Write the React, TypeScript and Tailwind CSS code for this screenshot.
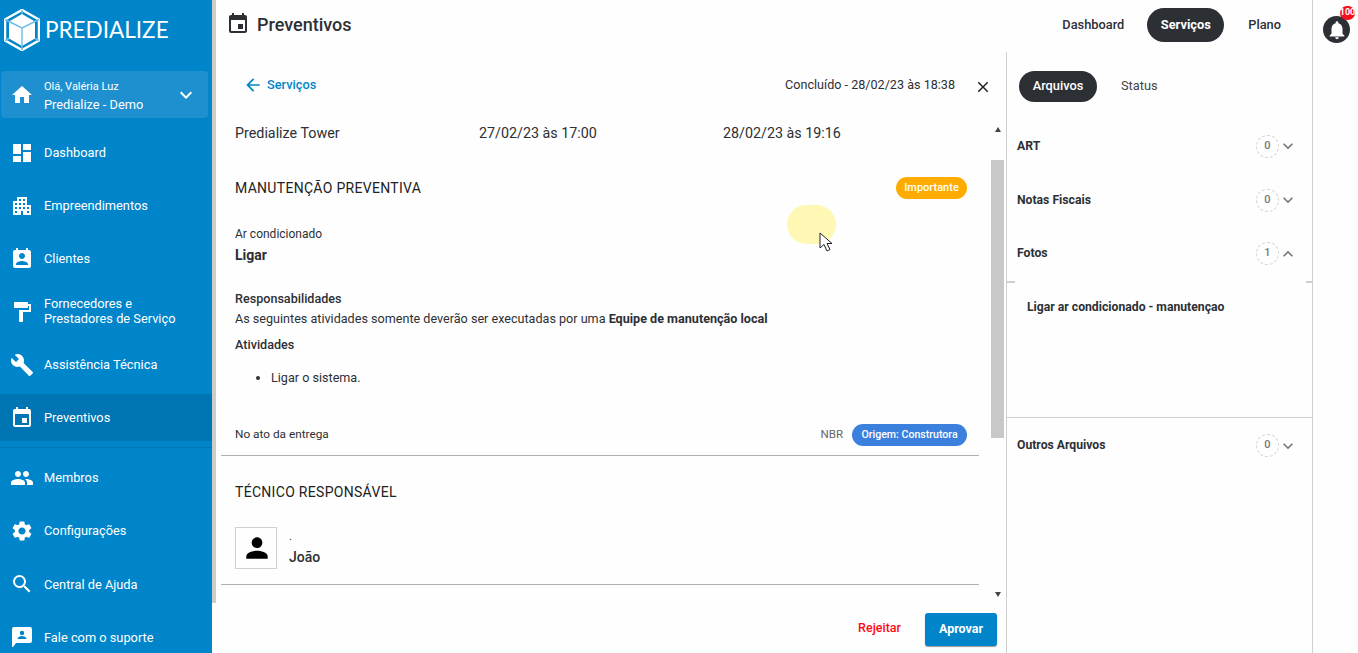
import {
  MdApartment,
  MdArrowBack,
  MdBuild,
  MdClose,
  MdDashboard,
  MdEvent,
  MdExpandLess,
  MdExpandMore,
  MdFormatPaint,
  MdHome,
  MdNotifications,
  MdPeople,
  MdPermContactCalendar,
  MdPerson,
  MdSearch,
  MdSettings,
} from 'react-icons/md';
import type { ReactNode } from 'react';

function Logo() {
  return (
    <svg width="36" height="42" viewBox="0 0 36 42" className="shrink-0">
      <path d="M18 1 35 10.500 35 31.500 18 41 1 31.500 1 10.500Z" fill="none" stroke="#ffffff" strokeWidth="2.500" />
      <path d="M18 5 31 12.500 31 29.500 18 37 5 29.500 5 12.500Z" fill="#ffffff" />
      <path d="M5 12.500 18 19 31 12.500M18 19V37M18 1V5M1 10.500 5 12.500M35 10.500 31 12.500M18 37V41M1 31.500 5 29.500M35 31.500 31 29.500" fill="none" stroke="#6dbce8" strokeWidth="1.400" />
    </svg>
  );
}

function SupportIcon() {
  return (
    <svg width="20" height="20" viewBox="0 0 20 20" fill="currentColor">
      <path d="M2 0h16a2 2 0 0 1 2 2v12a2 2 0 0 1-2 2H4l-3 4H0V2a2 2 0 0 1 2-2Z" />
      <circle cx="10" cy="6" r="2.2" fill="#0085ca" />
      <path d="M5.5 12c0-2 2.500-3 4.500-3s4.500 1 4.500 3Z" fill="#0085ca" />
    </svg>
  );
}

const NAV_TOP: { label: ReactNode; icon: ReactNode; active?: boolean }[] = [
  { label: 'Dashboard', icon: <MdDashboard size={24} /> },
  { label: 'Empreendimentos', icon: <MdApartment size={24} /> },
  { label: 'Clientes', icon: <MdPermContactCalendar size={24} /> },
  { label: <span className="block pb-[2px]">Fornecedores e<br />Prestadores de Serviço</span>, icon: <MdFormatPaint size={24} /> },
  { label: 'Assistência Técnica', icon: <MdBuild size={24} /> },
  { label: 'Preventivos', icon: <MdEvent size={24} />, active: true },
];

const NAV_BOTTOM: { label: string; icon: ReactNode }[] = [
  { label: 'Membros', icon: <MdPeople size={24} /> },
  { label: 'Configurações', icon: <MdSettings size={24} /> },
  { label: 'Central de Ajuda', icon: <MdSearch size={24} /> },
  { label: 'Fale com o suporte', icon: <SupportIcon /> },
];

function NavItem({ label, icon, active }: { label: ReactNode; icon: ReactNode; active?: boolean }) {
  return (
    <div className="h-[53px] py-[3px]">
      <div className={`flex h-[47px] items-center pl-[10px] text-[12.800px] leading-[15px] text-white ${active ? 'bg-[#0075b3]' : ''}`}>
        <span className="flex w-[24px] justify-center">{icon}</span>
        <span className="ml-[10px]">{label}</span>
      </div>
    </div>
  );
}

function Sidebar() {
  return (
    <aside className="flex h-[653px] w-[212px] shrink-0 flex-col overflow-hidden bg-[#0085ca]">
      <div className="flex h-[71px] shrink-0 items-start pl-[4px] pt-[9px] text-white">
        <Logo />
        <span className="ml-[5px] mt-[7px] text-[22.500px] leading-[28px] font-['Lato',sans-serif]">PREDIALIZE</span>
      </div>
      <div className="ml-[1px] flex h-[47px] w-[207px] shrink-0 items-center rounded-[4px] bg-[#1e90d0] pl-[9px] pr-[10px] text-white">
        <MdHome size={24} />
        <div className="ml-[10px] flex-1 pt-[2px]">
          <div className="text-[11px] leading-[14px]">Olá, Valéria Luz</div>
          <div className="mt-[3px] text-[12.800px] leading-[15px]">Predialize - Demo</div>
        </div>
        <MdExpandMore size={24} />
      </div>
      <nav className="mt-[8px] shrink-0">
        <div>
          {NAV_TOP.map((item, i) => (
            <NavItem key={i} {...item} />
          ))}
        </div>
        <div className="mt-[3px] grid auto-rows-[53.300px] border-t border-[#0075b3] pt-[3px]">
          {NAV_BOTTOM.map((item) => (
            <NavItem key={item.label} {...item} />
          ))}
        </div>
      </nav>
    </aside>
  );
}

function TopBar() {
  return (
    <header className="flex h-[50px] items-center justify-between pl-[10px] pr-[31px]">
      <div className="mb-[2px] flex items-center text-[#2c3035]">
        <MdEvent size={24} />
        <h1 className="ml-[7px] text-[18px] font-medium">Preventivos</h1>
      </div>
      <div className="flex items-center text-[12.800px] font-medium text-[#2c3035]">
        <span>Dashboard</span>
        <span className="ml-[23px] flex h-[34px] w-[77px] items-center justify-center rounded-full bg-[#2c3035] font-bold text-white">Serviços</span>
        <span className="ml-[24px]">Plano</span>
      </div>
    </header>
  );
}

function Scrollbar() {
  return (
    <div className="ml-[12px] flex w-[13px] flex-col items-center">
      <div className="mt-[7px] h-0 w-0 border-x-[3.500px] border-b-[5px] border-x-transparent border-b-[#444]" />
      <div className="mt-[28px] h-[278px] w-[13px] bg-[#c8c8c8]" />
      <div className="mt-[154px] h-0 w-0 border-x-[3.500px] border-t-[5px] border-x-transparent border-t-[#444]" />
    </div>
  );
}

function Detail() {
  return (
    <section className="flex min-w-0 flex-1 flex-col">
      <div className="mt-[2px] flex h-[68px] items-center justify-between pl-[27px] pr-[14px] pb-[2px]">
        <div className="flex items-center text-[12.800px] font-medium text-[#0085ca]">
          <MdArrowBack size={20} />
          <span className="ml-[4px]">Serviços</span>
        </div>
        <div className="flex items-center text-[12.600px] text-[#2c3035]">
          <span>Concluído - 28/02/23 às 18:38</span>
          <MdClose size={18} className="ml-[19px] mt-[3px] text-[#222]" />
        </div>
      </div>

      <div className="flex h-[485px] pl-[5px]">
        <div className="w-[758px] overflow-hidden text-[#2c3035]">
          <div className="grid h-[26px] grid-cols-[244px_244px_1fr] items-center px-[14px] pt-[2px] text-[14.300px]">
            <span>Predialize Tower</span>
            <span>27/02/23 às 17:00</span>
            <span>28/02/23 às 19:16</span>
          </div>
          <div className="border-b border-[#b0b0b0] px-[14px] pb-[9px]">
            <div className="mt-[31px] flex h-[22px] items-center justify-between">
              <h2 className="text-[14px] tracking-[0.3px] text-[#222]">MANUTENÇÃO PREVENTIVA</h2>
              <span className="mr-[-2px] flex h-[22px] w-[71px] items-center justify-center rounded-full bg-[#ffab00] text-[11px] font-medium text-white">Importante</span>
            </div>
            <p className="mt-[27px] text-[12px] leading-[16px]">Ar condicionado</p>
            <p className="mt-[3px] text-[14px] leading-[20px] font-bold">Ligar</p>
            <p className="mt-[26px] text-[12.600px] leading-[16px] font-medium">Responsabilidades</p>
            <p className="mt-[4px] text-[12.600px] leading-[16px]">
              As seguintes atividades somente deverão ser executadas por uma <b className="font-bold">Equipe de manutenção local</b>
            </p>
            <p className="mt-[10px] text-[12.600px] leading-[16px] font-medium">Atividades</p>
            <ul className="mt-[17px] list-disc pl-[36px] text-[12.600px] leading-[16px]">
              <li>Ligar o sistema.</li>
            </ul>
            <div className="mt-[38px] flex h-[22px] items-center justify-between">
              <span className="text-[11.800px]">No ato da entrega</span>
              <div className="mr-[-2px] flex items-center">
                <span className="text-[11.500px] text-[#666]">NBR</span>
                <span className="ml-[9px] flex h-[22px] w-[115px] items-center justify-center rounded-full bg-[#3a80dc] text-[10.600px] font-medium text-white">Origem: Construtora</span>
              </div>
            </div>
          </div>
          <div className="border-b border-[#b0b0b0] px-[14px] pb-[15px]">
            <h2 className="mt-[27px] text-[14px] leading-[18px] tracking-[0.3px] text-[#222]">TÉCNICO RESPONSÁVEL</h2>
            <div className="mt-[26px] flex items-center">
              <div className="flex h-[42px] w-[42px] items-center justify-center border border-[#d0d0d0] pl-[2px]">
                <MdPerson size={32} className="text-black" />
              </div>
              <div className="ml-[12px]">
                <p className="h-[14px] text-[11px] leading-[14px]">.</p>
                <p className="mt-[4px] text-[14px] leading-[18px] font-medium">João</p>
              </div>
            </div>
          </div>
        </div>
        <Scrollbar />
      </div>

      <div className="flex flex-1 items-center justify-end pr-[9px] pt-[1px] pb-[1px]">
        <span className="mb-[2px] text-[12.500px] font-medium text-[#ff0a16]">Rejeitar</span>
        <span className="ml-[24px] flex h-[33px] w-[72px] items-center justify-center rounded-[3px] bg-[#0085ca] text-[12.500px] font-bold text-white shadow-[0_1px_1px_#999]">Aprovar</span>
      </div>
    </section>
  );
}

function AccordionRow({ title, count, open, h }: { title: string; count: number; open?: boolean; h: string }) {
  return (
    <div className={`flex items-center justify-between pl-[10px] pr-[17px] ${h}`}>
      <span className="text-[12.200px] font-bold text-[#2c3035]">{title}</span>
      <div className="flex items-center text-[#777]">
        <span className="flex h-[23px] w-[23px] items-center justify-center rounded-full border border-dashed border-[#d4d4d4] text-[11px] font-medium">{count}</span>
        <span className="ml-[2px] flex w-[14px] justify-center">
          {open ? <MdExpandLess size={20} className="shrink-0" /> : <MdExpandMore size={20} className="shrink-0" />}
        </span>
      </div>
    </div>
  );
}

function FilesPanel() {
  return (
    <aside className="mt-[2px] w-[306px] shrink-0 border-l border-[#cfcfcf] text-[#2c3035]">
      <div className="flex h-[68px] items-center pl-[12px] text-[12.800px] font-medium">
        <span className="flex h-[31px] w-[78px] items-center justify-center rounded-full bg-[#2c3035] text-white">Arquivos</span>
        <span className="ml-[24px] font-normal text-[#444]">Status</span>
      </div>
      <AccordionRow title="ART" count={0} h="h-[50px] mt-[1px]" />
      <AccordionRow title="Notas Fiscais" count={0} h="h-[54px] mt-[2px]" />
      <AccordionRow title="Fotos" count={1} open h="h-[53px]" />
      <div className="mt-[1px] h-[137px] border-b border-[#cfcfcf]">
        <div className="flex justify-between">
          <span className="h-[2px] w-[8px] bg-[#cfcfcf]" />
          <span className="h-[2px] w-[6px] bg-[#cfcfcf]" />
        </div>
        <p className="ml-[20px] mt-[15px] text-[12.200px] font-bold">Ligar ar condicionado - manutençao</p>
      </div>
      <AccordionRow title="Outros Arquivos" count={0} h="h-[55px]" />
    </aside>
  );
}

export default function App() {
  return (
    <div className="relative flex h-[653px] w-[1358px] overflow-hidden bg-[#fefefe] font-['Roboto',sans-serif]">
      <Sidebar />
      <div className="h-[603px] w-[4px] shrink-0 bg-[#cccccc]" />
      <main className="flex w-[1097px] shrink-0 flex-col border-r border-[#cfcfcf]">
        <TopBar />
        <div className="flex min-h-0 flex-1">
          <Detail />
          <FilesPanel />
        </div>
      </main>
      <div className="flex flex-1 justify-center pl-[2px] pt-[16px]">
        <div className="relative flex h-[27px] w-[27px] items-center justify-center rounded-full bg-[#2c3035] text-white">
          <MdNotifications size={22} />
          <span className="absolute left-[17px] top-[-10px] flex h-[14px] w-[15px] items-center justify-center rounded-full bg-[#f5101c] text-[9px] font-bold">100</span>
        </div>
      </div>

      {/* cursor highlight from the recording */}
      <div className="absolute left-[787px] top-[205px] h-[39px] w-[49px] rounded-full bg-[#fff8b4]" />
      <svg className="absolute left-[819px] top-[232px]" width="15" height="21" viewBox="0 0 15 21">
        <path d="M1 1v15l4-3.500 3 6.500 3-1.500-3-6h5Z" fill="#ffffff" stroke="#222222" strokeWidth="1" />
      </svg>
    </div>
  );
}
